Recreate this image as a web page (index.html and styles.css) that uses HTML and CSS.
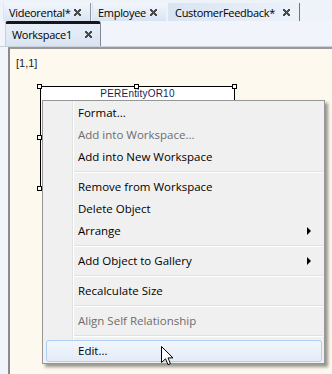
FILE: index.html
```html
<!DOCTYPE html>
<html lang="en">
<head>
  <meta charset="UTF-8">
  <title>CustomerFeedback - Workspace1</title>
  <link rel="stylesheet" href="styles.css">
</head>
<body>
  <div class="screen">
    <!-- document tabs -->
    <div class="doc-tabs">
      <div class="doc-tab tab-videorental">Videorental*<span class="close"></span></div>
      <div class="doc-tab tab-employee">Employee<span class="close"></span></div>
      <div class="doc-tab tab-feedback">CustomerFeedback*<span class="close"></span></div>
    </div>

    <!-- workspace tabs -->
    <div class="ws-tabs">
      <div class="ws-tab">Workspace1<span class="close"></span></div>
    </div>

    <!-- diagram canvas -->
    <div class="canvas">
      <div class="grid-label">[1,1]</div>
      <div class="entity">
        <div class="entity-title">PEREntityOR10</div>
      </div>
      <span class="handle h-tl"></span>
      <span class="handle h-tm"></span>
      <span class="handle h-tr"></span>
      <span class="handle h-ml"></span>
      <span class="handle h-bl"></span>
    </div>

    <!-- context menu -->
    <ul class="menu">
      <li class="item">Format...</li>
      <li class="item disabled">Add into Workspace...</li>
      <li class="item">Add into New Workspace</li>
      <li class="sep"></li>
      <li class="item">Remove from Workspace</li>
      <li class="item">Delete Object</li>
      <li class="item sub">Arrange</li>
      <li class="sep"></li>
      <li class="item sub">Add Object to Gallery</li>
      <li class="sep"></li>
      <li class="item">Recalculate Size</li>
      <li class="sep"></li>
      <li class="item disabled">Align Self Relationship</li>
      <li class="sep"></li>
      <li class="item hover">Edit...</li>
    </ul>

    <svg class="cursor" width="13" height="20" viewBox="0 0 13 20">
      <path d="M0.5 0.5 L0.5 16.5 L4.5 12.8 L7 18.6 L9.4 17.6 L7 11.9 L12 11.9 Z" fill="#fff" stroke="#000" stroke-width="1" stroke-linejoin="miter"/>
    </svg>
  </div>
</body>
</html>
```

FILE: styles.css
```css
* {
  box-sizing: border-box;
}
body {
  margin: 0;
  font-family: "Segoe UI", "Open Sans", sans-serif;
  font-size: 11.5px;
  color: #000;
}
.screen {
  position: relative;
  width: 332px;
  height: 374px;
  overflow: hidden;
  background: #f1f5fb;
}

/* top document tabs */
.doc-tabs {
  display: flex;
  height: 21px;
  padding: 3px 0 0 3px;
  background: #eef3fa;
}
.doc-tab {
  display: flex;
  align-items: center;
  height: 18px;
  padding-left: 5px;
  background: linear-gradient(#f2f6fc, #d9e4f3);
  border-left: 1px solid #dde5f0;
  font-size: 11px;
  letter-spacing: -0.3px;
  white-space: nowrap;
}
.tab-videorental {
  width: 88px;
  border-right: 1px solid #8f99a6;
}
.tab-employee {
  width: 74px;
  margin-left: 1px;
}
.tab-feedback {
  width: 132px;
  margin-left: 2px;
  padding-left: 6px;
  background: linear-gradient(to right, #d9e4f3, #edf2fa);
  border-right: 1px solid #6f7379;
}
.close {
  flex-shrink: 0;
  width: 7px;
  height: 7px;
  margin-left: auto;
  margin-right: 9px;
  background:
    linear-gradient(45deg, transparent 38%, #4a4a4a 38%, #4a4a4a 62%, transparent 62%),
    linear-gradient(-45deg, transparent 38%, #4a4a4a 38%, #4a4a4a 62%, transparent 62%);
}

/* workspace tabs */
.ws-tabs {
  display: flex;
  height: 26px;
  padding-left: 5px;
  border-bottom: 1px solid #c9d0d9;
  background: #f1f5fb;
}
.ws-tab {
  display: flex;
  align-items: center;
  width: 96px;
  height: 25px;
  padding: 0 0 2px 6px;
  border-top: 3px solid #161616;
  border-left: 1px solid #c6cfdb;
  border-right: 1px solid #7f8894;
  border-radius: 3px 3px 0 0;
  background: linear-gradient(#e6eef8, #dbe5f2);
  font-size: 11px;
  letter-spacing: -0.3px;
}
.ws-tab .close {
  margin-right: 8px;
}

/* canvas */
.canvas {
  position: relative;
  height: 327px;
  margin-left: 8px;
  border-top: 2px solid #9a9a9a;
  border-left: 2px solid #8a8a8a;
  background: #fdf9ee;
  font-family: "Liberation Sans", Arial, sans-serif;
}
.grid-label {
  padding: 8px 0 0 6px;
  font-size: 11px;
  color: #222;
}
.entity {
  position: absolute;
  left: 30px;
  top: 37px;
  width: 195px;
  height: 103px;
  border: 1px solid #000;
  background: #fff;
}
.entity-title {
  padding-top: 1px;
  text-align: center;
  font-size: 10px;
  letter-spacing: 0.2px;
  color: #1c1c55;
}
.handle {
  position: absolute;
  width: 5px;
  height: 5px;
  border: 1px solid #000;
  background: #fff;
}
.h-tl { left: 27px; top: 35px; }
.h-tm { left: 124px; top: 35px; }
.h-tr { left: 222px; top: 35px; }
.h-ml { left: 27px; top: 86px; }
.h-bl { left: 27px; top: 137px; }

/* context menu */
.menu {
  position: absolute;
  left: 42px;
  top: 100px;
  width: 283px;
  margin: 0;
  padding: 1px;
  list-style: none;
  border: 1px solid #979797;
  background:
    linear-gradient(to right, transparent 29px, #e2e3e3 29px, #e2e3e3 30px, #fff 30px, #fff 31px, transparent 31px),
    #f0f0f0;
  box-shadow: 3px 3px 3px rgba(0, 0, 0, 0.4);
}
.item {
  display: flex;
  align-items: center;
  justify-content: space-between;
  height: 22px;
  margin: 0 1px 0 2px;
  padding: 0 10px 1px 31px;
  border: 1px solid transparent;
  border-radius: 3px;
  white-space: nowrap;
}
.item.disabled {
  color: #6d6d6d;
}
.item.sub::after {
  content: "";
  border-left: 4px solid #000;
  border-top: 4px solid transparent;
  border-bottom: 4px solid transparent;
}
.item.hover {
  border-color: #aecff7;
  background: linear-gradient(rgba(242, 247, 254, 0.85), rgba(226, 236, 250, 0.85));
}
.sep {
  height: 8px;
  margin-left: 30px;
  padding-top: 3px;
}
.sep::before {
  content: "";
  display: block;
  height: 1px;
  background: #e0e0e0;
  border-bottom: 1px solid #fff;
  box-sizing: content-box;
}

.cursor {
  position: absolute;
  left: 161px;
  top: 346px;
}
```
